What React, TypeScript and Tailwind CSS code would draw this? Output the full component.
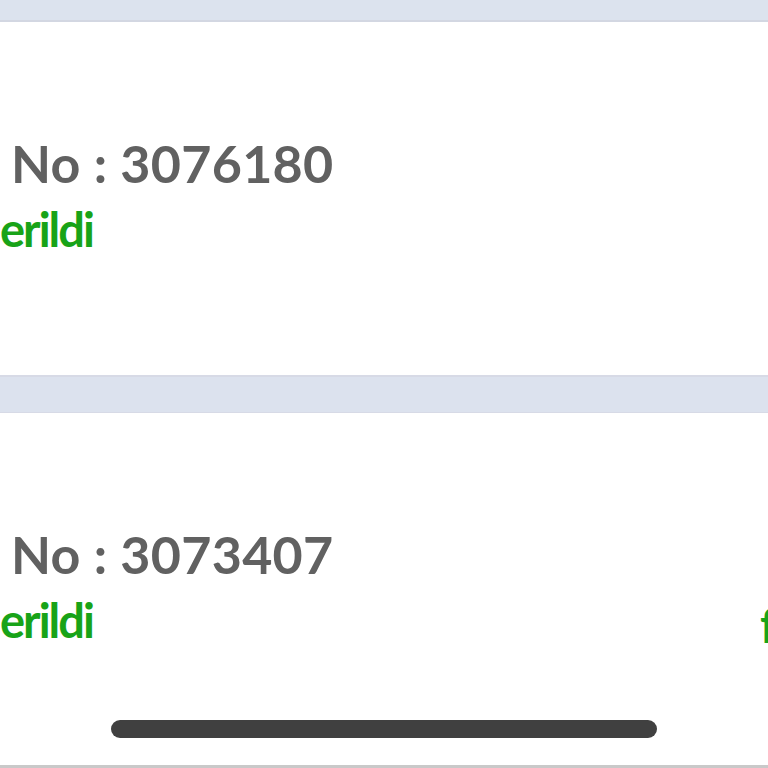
import React from "react";

function Card({ no, extra }: { no: string; extra?: boolean }) {
  return (
    <div className="relative h-[353px] bg-white overflow-hidden">
      <div className="pl-[11px] pt-[115px] font-['Lato',sans-serif] text-[52px] font-bold leading-none text-[#616161] whitespace-nowrap tracking-[0.3px]">
        {no}
      </div>
      <div className="mt-[17px] font-['Lato',sans-serif] text-[47px] font-bold leading-none text-[#18a318] whitespace-nowrap tracking-[-2px]">
        erildi
      </div>
      {extra && (
        <div className="absolute left-[760px] top-[189px] font-['Lato',sans-serif] text-[47px] font-bold leading-none text-[#18a318]">
          f
        </div>
      )}
    </div>
  );
}

export default function App() {
  return (
    <div className="w-[768px] h-[768px] overflow-hidden bg-white flex flex-col">
      <div className="h-[22px] shrink-0 bg-[#dce3ee] border-b-2 border-[#d3d7e2]" />
      <Card no="No : 3076180" />
      <div className="h-[38px] shrink-0 bg-[#dce2ee] border-t-2 border-[#c3c6cb] border-b border-[#d7dae6]" />
      <div className="relative flex-1 bg-white">
        <Card no="No : 3073407" extra />
        <div className="absolute left-[111px] top-[307px] w-[546px] h-[18px] rounded-full bg-[#404040]" />
        <div className="absolute left-0 right-0 bottom-0 h-[3px] bg-[#c9c9c9]" />
      </div>
    </div>
  );
}
